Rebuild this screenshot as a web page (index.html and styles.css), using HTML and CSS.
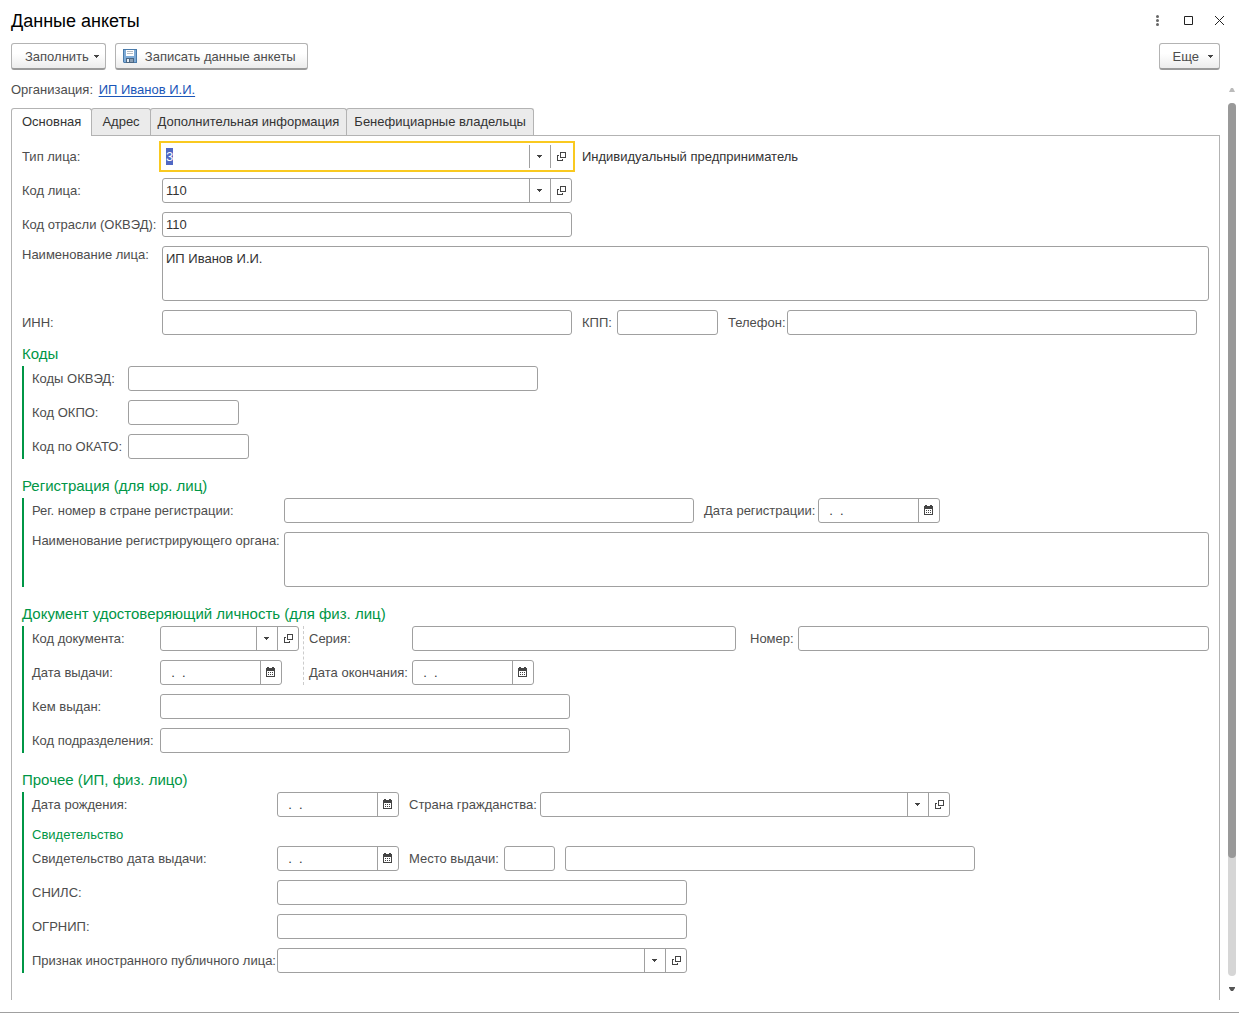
FILE: index.html
```html
<!DOCTYPE html>
<html lang="ru">
<head>
<meta charset="utf-8">
<meta name="viewport" content="width=device-width, initial-scale=1">
<title>Данные анкеты</title>
<link rel="stylesheet" href="styles.css">
</head>
<body>
<svg class="sprite" aria-hidden="true">
  <symbol id="i-caret" viewBox="0 0 5 3"><path d="M0 0h5v1H0zM1 1h3v1H1zM2 2h1v1H2z"/></symbol>
  <symbol id="i-open" viewBox="0 0 9 9"><path fill-rule="evenodd" d="M3 0h6v6H3zM4 1v4h4V1zM0 3h2v1H1v4h4V7h1v2H0z"/></symbol>
  <symbol id="i-calendar" viewBox="0 0 9 10"><path fill-rule="evenodd" d="M1 0h2v1h3V0h2v1h1v9H0V1h1zM1 4v5h7V4z"/><path d="M2 5h1v1H2zM4 5h1v1H4zM6 5h1v1H6zM2 7h1v1H2zM4 7h1v1H4zM6 7h1v1H6z"/></symbol>
</svg>

<header class="titlebar">
  <h1>Данные анкеты</h1>
  <div class="window-controls">
    <button type="button" aria-label="Меню"><svg width="11" height="11" viewBox="0 0 11 11"><g fill="#666"><circle cx="5.500" cy="1.500" r="1.500"/><circle cx="5.500" cy="5.500" r="1.500"/><circle cx="5.500" cy="9.500" r="1.500"/></g></svg></button>
    <button type="button" aria-label="Развернуть"><svg width="11" height="11" viewBox="0 0 11 11"><path fill="none" stroke="#222" d="M1.500 1.500h8v8h-8z"/></svg></button>
    <button type="button" aria-label="Закрыть"><svg width="11" height="11" viewBox="0 0 11 11"><path fill="none" stroke="#222" d="M1 1l9 9M10 1l-9 9"/></svg></button>
  </div>
</header>

<div class="toolbar">
  <button type="button" class="btn btn-menu">Заполнить<svg class="caret"><use href="#i-caret"/></svg></button>
  <button type="button" class="btn btn-save"><svg width="14" height="14" viewBox="0 0 14 14"><path fill="#4a7bab" d="M0 0h14v14H1l-1-1z"/><path fill="#7fabd6" d="M1 1h12v12H1z"/><path fill="#fff" d="M3 1h8v6H3z"/><path fill="#b4bcc4" d="M4 2h6v1H4zM4 4h6v1H4z"/><path fill="#4a6683" d="M3 9h8v5H3z"/><path fill="#8b9fb3" d="M7 10h3v3H7z"/><path fill="#e8eef4" d="M4 10h2v3H4z"/></svg>Записать данные анкеты</button>
  <button type="button" class="btn btn-menu btn-more">Еще<svg class="caret"><use href="#i-caret"/></svg></button>
</div>

<div class="workspace">
<main>
  <div class="organization">Организация: <a href="#organization">ИП Иванов И.И.</a></div>
  <div class="tabs" role="tablist">
    <button type="button" role="tab" aria-selected="true">Основная</button>
    <button type="button" role="tab" aria-selected="false">Адрес</button>
    <button type="button" role="tab" aria-selected="false" class="tab-long">Дополнительная информация</button>
    <button type="button" role="tab" aria-selected="false" class="tab-long">Бенефициарные владельцы</button>
  </div>

  <form class="panel">
    <div class="group group-main">
      <div class="row">
        <label for="type">Тип лица:</label>
        <div class="field"><input id="type" value="3"><button type="button" aria-label="Выбрать"><svg class="caret"><use href="#i-caret"/></svg></button><button type="button" aria-label="Открыть"><svg class="open"><use href="#i-open"/></svg></button></div>
        <span class="note">Индивидуальный предприниматель</span>
      </div>
      <div class="row">
        <label for="code">Код лица:</label>
        <div class="field"><input id="code" value="110"><button type="button" aria-label="Выбрать"><svg class="caret"><use href="#i-caret"/></svg></button><button type="button" aria-label="Открыть"><svg class="open"><use href="#i-open"/></svg></button></div>
      </div>
      <div class="row">
        <label for="branch">Код отрасли (ОКВЭД):</label>
        <div class="field"><input id="branch" value="110"></div>
      </div>
      <div class="row row-tall">
        <label for="name">Наименование лица:</label>
        <textarea id="name">ИП Иванов И.И.</textarea>
      </div>
      <div class="row">
        <label for="inn">ИНН:</label>
        <div class="field"><input id="inn"></div>
        <label class="next label-kpp" for="kpp">КПП:</label>
        <div class="field field-kpp"><input id="kpp"></div>
        <label class="next label-phone" for="phone">Телефон:</label>
        <div class="field"><input id="phone" type="tel"></div>
      </div>
    </div>

    <section>
      <h2>Коды</h2>
      <div class="group group-ruled group-codes">
        <div class="row"><label for="okved">Коды ОКВЭД:</label><div class="field"><input id="okved"></div></div>
        <div class="row"><label for="okpo">Код ОКПО:</label><div class="field field-okpo"><input id="okpo"></div></div>
        <div class="row"><label for="okato">Код по ОКАТО:</label><div class="field field-okato"><input id="okato"></div></div>
      </div>
    </section>

    <section>
      <h2>Регистрация (для юр. лиц)</h2>
      <div class="group group-ruled group-registration">
        <div class="row">
          <label for="regnum">Рег. номер в стране регистрации:</label>
          <div class="field"><input id="regnum"></div>
          <label class="next label-regdate" for="regdate">Дата регистрации:</label>
          <div class="field field-date"><input id="regdate" value="  .  ."><button type="button" aria-label="Календарь"><svg class="calendar"><use href="#i-calendar"/></svg></button></div>
        </div>
        <div class="row row-tall">
          <label for="regorg">Наименование регистрирующего органа:</label>
          <textarea id="regorg"></textarea>
        </div>
      </div>
    </section>

    <section>
      <h2>Документ удостоверяющий личность (для физ. лиц)</h2>
      <div class="group group-ruled group-document">
        <div class="split">
          <div class="split-left">
            <div class="row">
              <label for="doccode">Код документа:</label>
              <div class="field field-doccode"><input id="doccode"><button type="button" aria-label="Выбрать"><svg class="caret"><use href="#i-caret"/></svg></button><button type="button" aria-label="Открыть"><svg class="open"><use href="#i-open"/></svg></button></div>
            </div>
            <div class="row">
              <label for="issued">Дата выдачи:</label>
              <div class="field field-date"><input id="issued" value="  .  ."><button type="button" aria-label="Календарь"><svg class="calendar"><use href="#i-calendar"/></svg></button></div>
            </div>
          </div>
          <div class="split-right">
            <div class="row">
              <label for="series">Серия:</label>
              <div class="field field-series"><input id="series"></div>
              <label class="label-number" for="number">Номер:</label>
              <div class="field field-fill"><input id="number"></div>
            </div>
            <div class="row">
              <label for="expires">Дата окончания:</label>
              <div class="field field-date"><input id="expires" value="  .  ."><button type="button" aria-label="Календарь"><svg class="calendar"><use href="#i-calendar"/></svg></button></div>
            </div>
          </div>
        </div>
        <div class="row"><label for="issuer">Кем выдан:</label><div class="field"><input id="issuer"></div></div>
        <div class="row"><label for="unit">Код подразделения:</label><div class="field"><input id="unit"></div></div>
      </div>
    </section>

    <section>
      <h2>Прочее (ИП, физ. лицо)</h2>
      <div class="group group-ruled group-other">
        <div class="row">
          <label for="birth">Дата рождения:</label>
          <div class="field field-date"><input id="birth" value="  .  ."><button type="button" aria-label="Календарь"><svg class="calendar"><use href="#i-calendar"/></svg></button></div>
          <label class="next label-country" for="country">Страна гражданства:</label>
          <div class="field"><input id="country"><button type="button" aria-label="Выбрать"><svg class="caret"><use href="#i-caret"/></svg></button><button type="button" aria-label="Открыть"><svg class="open"><use href="#i-open"/></svg></button></div>
        </div>
        <h3>Свидетельство</h3>
        <div class="row">
          <label for="certdate">Свидетельство дата выдачи:</label>
          <div class="field field-date"><input id="certdate" value="  .  ."><button type="button" aria-label="Календарь"><svg class="calendar"><use href="#i-calendar"/></svg></button></div>
          <label class="next label-place" for="place">Место выдачи:</label>
          <div class="field field-place"><input id="place"></div>
          <div class="field next"><input aria-label="Место выдачи, наименование"></div>
        </div>
        <div class="row"><label for="snils">СНИЛС:</label><div class="field"><input id="snils"></div></div>
        <div class="row"><label for="ogrnip">ОГРНИП:</label><div class="field"><input id="ogrnip"></div></div>
        <div class="row">
          <label for="foreign">Признак иностранного публичного лица:</label>
          <div class="field"><input id="foreign"><button type="button" aria-label="Выбрать"><svg class="caret"><use href="#i-caret"/></svg></button><button type="button" aria-label="Открыть"><svg class="open"><use href="#i-open"/></svg></button></div>
        </div>
      </div>
    </section>
  </form>
</main>
<div class="scrollbar" aria-hidden="true">
  <svg width="6" height="4" viewBox="0 0 6 4"><path fill="#bbb" d="M2 0h2l2 4H0z"/></svg>
  <div class="track"><div class="thumb"></div></div>
  <svg width="6" height="4" viewBox="0 0 6 4"><path fill="#555" d="M0 0h6v1L4 4H2L0 1z"/></svg>
</div>
</div>
<script src="script.js"></script>
</body>
</html>
```
FILE: styles.css
```css
* { box-sizing: border-box; }

body {
  display: flex;
  flex-direction: column;
  min-height: 100vh;
  margin: 0;
  border-bottom: 1px solid #a0a0a0;
  background: #fff;
  color: #4d4d4d;
  font: 13px/17px "Liberation Sans", Arial, sans-serif;
}

button, input, textarea { margin: 0; font: inherit; color: inherit; }
button { padding: 0; border: 0; background: none; }
.sprite { display: none; }

.caret { width: 5px; height: 3px; fill: #444; }
.open { width: 9px; height: 9px; fill: #444; }
.calendar { width: 9px; height: 10px; fill: #444; }

/* Window header */
.titlebar {
  display: flex;
  justify-content: space-between;
  align-items: center;
  height: 43px;
  padding: 0 14px 2px 11px;
}
h1 { margin: 0; color: #000; font-size: 18px; line-height: 22px; font-weight: normal; }
.window-controls { display: flex; gap: 20px; }
.window-controls button { display: flex; }

.toolbar { display: flex; gap: 9px; padding: 0 19px 0 11px; }
.btn {
  display: flex;
  align-items: center;
  height: 27px;
  border: 1px solid #b3b3b3;
  border-bottom: 2px solid #9a9a9a;
  border-radius: 3px;
  background: linear-gradient(#fff 40%, #ececec);
  white-space: nowrap;
}
.btn-menu { gap: 5px; padding: 0 6px 0 13px; }
.btn-save { gap: 8px; padding: 0 11px 0 7px; }
.btn-more { gap: 9px; margin-left: auto; }

/* Content and scrollbar */
.workspace { display: flex; flex: 1; padding-bottom: 12px; }
main { display: flex; flex-direction: column; flex: 1; min-width: 0; padding-left: 11px; }
.organization { padding: 11px 0 10px; }
.organization a { margin-left: 2px; color: #1a56b8; text-underline-offset: 2px; }

.tabs { display: flex; }
.tabs button {
  height: 27px;
  margin-right: -1px;
  padding: 0 10px 2px;
  border: 1px solid #b3b3b3;
  border-bottom: 0;
  border-radius: 3px 3px 0 0;
  background: #ebebeb;
  color: #333;
  white-space: nowrap;
}
.tabs [aria-selected="true"] { z-index: 1; height: 28px; margin-bottom: -1px; padding-bottom: 3px; background: #fff; }
.tabs .tab-long { padding: 0 7px 2px; }

.panel { flex: 1; padding: 8px 10px 27px; border: 1px solid #b3b3b3; border-bottom: 0; }

.scrollbar {
  display: flex;
  flex-direction: column;
  align-items: center;
  gap: 11px;
  width: 19px;
  padding: 18px 3px 9px 8px;
}
.track { display: flex; flex-direction: column; flex: 1; width: 8px; border-radius: 4px; background: #d6d6d6; }
.thumb { flex-basis: 86.5%; border-radius: 4px; background: #999; }

/* Form rows */
.row { display: flex; align-items: center; }
.row + .row, .split + .row { margin-top: 9px; }
.row-tall { align-items: flex-start; }
.row > * { flex: none; }
label, .note { white-space: nowrap; }
label { width: var(--label); }
.next, .note { margin-left: 10px; }
.note { color: #333; }

.field {
  display: flex;
  width: 410px;
  height: 25px;
  border: 1px solid #a0a0a0;
  border-radius: 3px;
  background: #fff;
}
.field input { flex: 1; min-width: 0; padding: 0 3px; border: 0; outline: 0; background: none; color: #333; }
.field button {
  display: flex;
  align-items: center;
  justify-content: center;
  width: 21px;
  border-left: 1px solid #a0a0a0;
}
.field .caret { margin-right: 2px; }
.field .calendar { margin: 0 2px 1px 0; }
.field:focus-within { border-color: transparent; outline: 2px solid #f9c920; outline-offset: 1px; border-radius: 0; }
input::selection { background: #5068c4; color: #fff; }

.row > textarea {
  flex: 1;
  min-width: 0;
  height: 55px;
  padding: 3px;
  border: 1px solid #a0a0a0;
  border-radius: 3px;
  color: #333;
  resize: none;
}

/* Sections */
h2, h3 { margin: 0; color: #009646; font-weight: normal; }
h2 { padding: 10px 0 3px; font-size: 15px; line-height: 18px; }
h3 { padding: 9px 0 3px; font-size: 13px; line-height: 17px; }
section + section { margin-top: 8px; }
.group-ruled { padding-left: 8px; border-left: 2px solid #009646; }

.group-main { --label: 140px; }
.group-codes { --label: 96px; }
.group-registration { --label: 252px; }
.group-document { --label: 128px; }
.group-other { --label: 245px; }

.label-kpp { --label: 35px; }
.label-phone { --label: 59px; }
.label-regdate { --label: 114px; }
.label-number { --label: 48px; margin-left: 14px; }
.label-country { --label: 131px; }
.label-place { --label: 95px; }

.field-kpp { width: 101px; }
.field-okpo { width: 111px; }
.field-okato { width: 121px; }
.field-date { width: 122px; }
.field-doccode { width: 139px; }
.field-series { width: 324px; }
.field-place { width: 51px; }
.row > .field-fill { flex: 1; min-width: 0; }

.split { display: flex; }
.split-right { --label: 103px; flex: 1; min-width: 0; margin-left: 4px; padding-left: 5px; border-left: 1px dashed #ccc; }
```
FILE: script.js
```js
// The first field is ready for typing over as soon as the form opens.
const first = document.getElementById("type");
first.focus();
first.select();
```
